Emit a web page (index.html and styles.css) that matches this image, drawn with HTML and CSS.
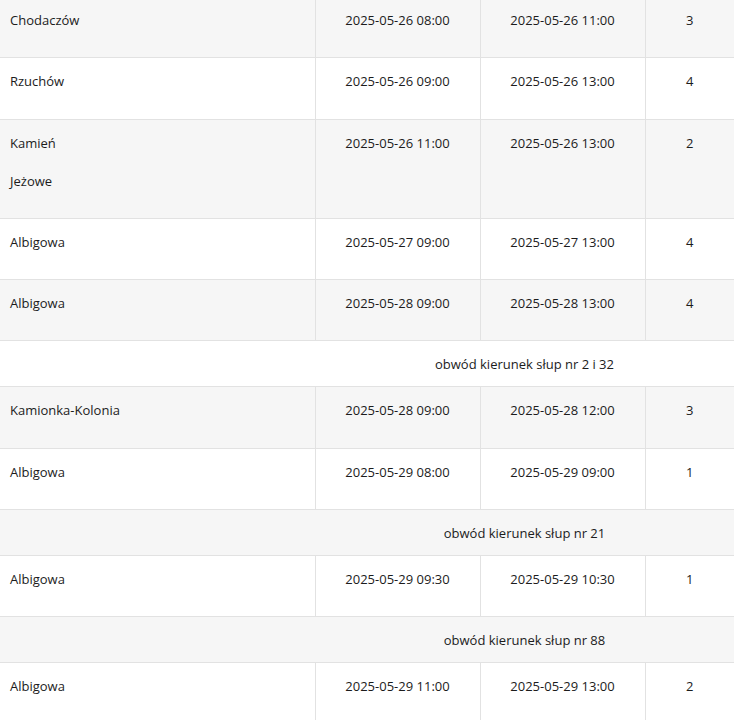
FILE: index.html
```html
<!DOCTYPE html>
<html lang="pl">
<head>
<meta charset="utf-8">
<title>Harmonogram wyłączeń</title>
<link rel="stylesheet" href="styles.css">
</head>
<body>
<table class="schedule">
  <colgroup>
    <col class="c-place">
    <col class="c-date">
    <col class="c-date">
    <col class="c-count">
  </colgroup>
  <tbody>
    <tr>
      <td class="place"><p>Chodaczów</p></td>
      <td class="center">2025-05-26 08:00</td>
      <td class="center">2025-05-26 11:00</td>
      <td class="center">3</td>
    </tr>
    <tr>
      <td class="place"><p>Rzuchów</p></td>
      <td class="center">2025-05-26 09:00</td>
      <td class="center">2025-05-26 13:00</td>
      <td class="center">4</td>
    </tr>
    <tr>
      <td class="place"><p>Kamień</p><p>Jeżowe</p></td>
      <td class="center">2025-05-26 11:00</td>
      <td class="center">2025-05-26 13:00</td>
      <td class="center">2</td>
    </tr>
    <tr>
      <td class="place"><p>Albigowa</p></td>
      <td class="center">2025-05-27 09:00</td>
      <td class="center">2025-05-27 13:00</td>
      <td class="center">4</td>
    </tr>
    <tr>
      <td class="place"><p>Albigowa</p></td>
      <td class="center">2025-05-28 09:00</td>
      <td class="center">2025-05-28 13:00</td>
      <td class="center">4</td>
    </tr>
    <tr class="note">
      <td class="note-empty"></td>
      <td class="note-text" colspan="3">obwód kierunek słup nr 2 i 32</td>
    </tr>
    <tr>
      <td class="place"><p>Kamionka-Kolonia</p></td>
      <td class="center">2025-05-28 09:00</td>
      <td class="center">2025-05-28 12:00</td>
      <td class="center">3</td>
    </tr>
    <tr>
      <td class="place"><p>Albigowa</p></td>
      <td class="center">2025-05-29 08:00</td>
      <td class="center">2025-05-29 09:00</td>
      <td class="center">1</td>
    </tr>
    <tr class="note">
      <td class="note-empty"></td>
      <td class="note-text" colspan="3">obwód kierunek słup nr 21</td>
    </tr>
    <tr>
      <td class="place"><p>Albigowa</p></td>
      <td class="center">2025-05-29 09:30</td>
      <td class="center">2025-05-29 10:30</td>
      <td class="center">1</td>
    </tr>
    <tr class="note">
      <td class="note-empty"></td>
      <td class="note-text" colspan="3">obwód kierunek słup nr 88</td>
    </tr>
    <tr>
      <td class="place"><p>Albigowa</p></td>
      <td class="center">2025-05-29 11:00</td>
      <td class="center">2025-05-29 13:00</td>
      <td class="center">2</td>
    </tr>
  </tbody>
</table>
</body>
</html>
```
FILE: styles.css
```css
html, body {
  margin: 0;
  padding: 0;
  background: #ffffff;
}

body {
  font-family: "Open Sans", "Noto Sans", sans-serif;
  font-size: 13px;
  color: #1c1c1c;
  overflow: hidden;
}

.schedule {
  width: 734px;
  border-collapse: collapse;
  table-layout: fixed;
  margin-top: -3px;
}

.c-place { width: 315px; }
.c-date { width: 165px; }
.c-count { width: 89px; }

.schedule tr:nth-child(odd) {
  background: #f6f6f6;
}

.schedule tr:nth-child(even) {
  background: #ffffff;
}

.schedule td {
  vertical-align: top;
  line-height: 22px;
  padding: 12px 8px 26px;
  border-bottom: 1px solid #e2e2e2;
  border-left: 1px solid #e2e2e2;
}

.schedule td:first-child {
  border-left: none;
}

.schedule td.place {
  padding: 12px 8px 10.3px 10px;
}

.place p {
  margin: 0 0 16px;
}

.center {
  text-align: center;
}

.schedule tr.note td {
  border-left: none;
  padding: 12px 8px 11px;
}

.note-text {
  text-align: center;
}
```
